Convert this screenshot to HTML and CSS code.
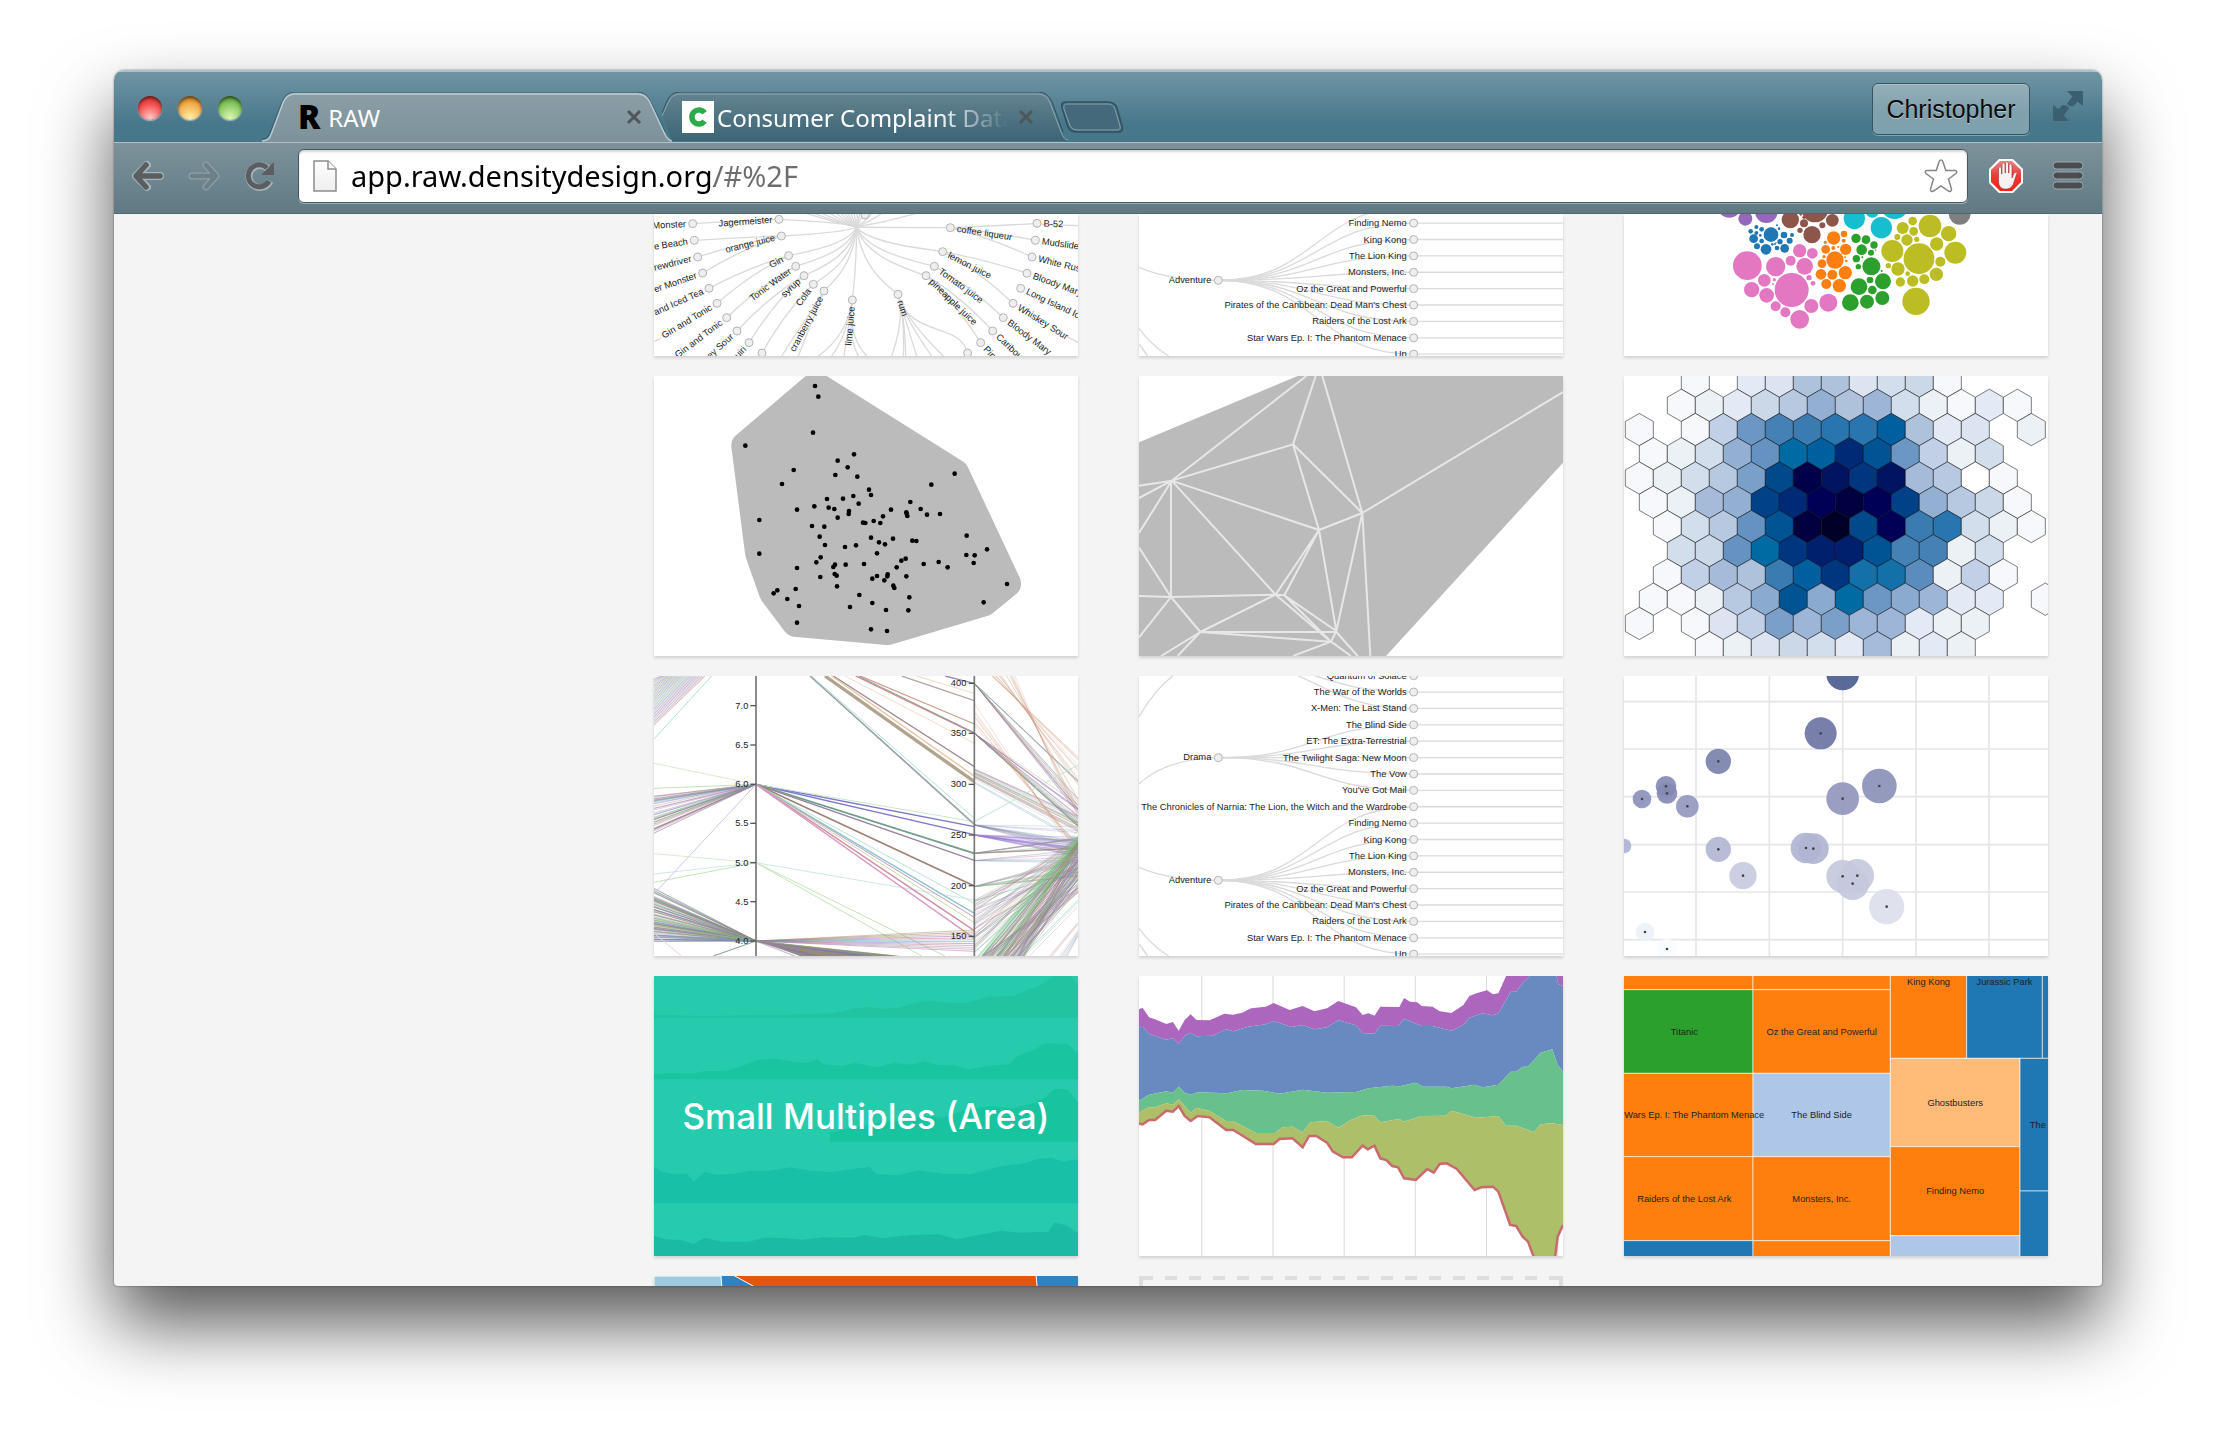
FILE: index.html
```html
<!DOCTYPE html>
<html lang="en">
<head>
<meta charset="utf-8">
<title>RAW</title>
<link rel="stylesheet" href="styles.css">
</head>
<body>
<div class="window">
  <header class="titlebar">
    <div class="lights">
      <button class="light light-red" aria-label="Close window"></button>
      <button class="light light-amber" aria-label="Minimize window"></button>
      <button class="light light-green" aria-label="Zoom window"></button>
    </div>
    <nav class="tabs">
      <div class="tab tab-active">
        <svg class="tab-shape" viewBox="0 0 424 50" preserveAspectRatio="none" aria-hidden="true">
          <defs><linearGradient id="ga" x1="0" y1="0" x2="0" y2="1"><stop offset="0" stop-color="#8b9ea6"/><stop offset="1" stop-color="#7d929b"/></linearGradient></defs>
          <path d="M0 50C9 49 8 45 12 36L22 10Q26 1 34 1H388Q397 1 401 10L417 41Q420 49 424 50Z" fill="url(#ga)"/>
          <path d="M0 47C7 47 7 43 11 34L21 9Q25 0 34 0H388Q398 0 402 10L417 40" fill="none" stroke="#33525e" stroke-opacity=".7"/>
          <path d="M0 49C9 48 8 45 12 36L22 10Q26 2 34 2H388Q397 2 401 10L416 41Q420 49 424 49" fill="none" stroke="#bccbd1" stroke-width="1.5"/>
        </svg>
        <button class="tab-title"><span class="fav-r">R</span><span>RAW</span></button>
        <button class="tab-close" aria-label="Close tab"><svg viewBox="0 0 16 16"><path d="M2 2L14 14M14 2L2 14"/></svg></button>
      </div>
      <div class="tab tab-back">
        <svg class="tab-shape" viewBox="0 0 408 50" preserveAspectRatio="none" aria-hidden="true">
          <defs><linearGradient id="gb" x1="0" y1="0" x2="0" y2="1"><stop offset="0" stop-color="#64838f"/><stop offset="1" stop-color="#3c6576"/></linearGradient></defs>
          <path d="M0 22L5 10Q9 1 18 1H378Q387 1 391 10L402 40Q405 48 408 49H10Z" fill="url(#gb)"/>
          <path d="M0 21L5 9Q9 0 18 0H378Q388 0 392 10L403 40" fill="none" stroke="#2f5060"/>
          <path d="M0 24L6 11Q10 2 18 2H378Q386 2 390 11L401 40Q404 48 408 48" fill="none" stroke="#8fa8b2"/>
        </svg>
        <button class="tab-title"><svg class="fav-c" viewBox="0 0 32 32"><rect width="32" height="32" fill="#fff"/><path d="M22.500 11.800A7 7 0 1 0 22.500 20.200" fill="none" stroke="#2bab49" stroke-width="5.500"/></svg><span class="fade">Consumer Complaint Datab</span></button>
        <button class="tab-close" aria-label="Close tab"><svg viewBox="0 0 16 16"><path d="M2 2L14 14M14 2L2 14"/></svg></button>
      </div>
      <button class="new-tab" aria-label="New tab"><svg viewBox="0 0 64 32"><path d="M6 1H48Q55 1 57 7L62 25Q64 31 58 31H17Q10 31 8 26L2 7Q0 1 6 1Z" fill="#44697a" stroke="#2f5261" stroke-width="1.500"/><path d="M7 3H48Q53 3 55 8L60 25Q61 29 57 29H17Q12 29 10 25L4 8Q3 3 7 3Z" fill="none" stroke="#87a2ad"/></svg></button>
    </nav>
    <button class="profile">Christopher</button>
    <button class="icon-btn expand" aria-label="Full screen"><svg viewBox="0 0 30 30"><path d="M14 1H29V15L24 11L20 15Q16 16 14 13L19 6ZM1 14L6 18L10 14Q14 14 16 17L11 24L16 29H1Z" fill="#3b5f6e"/></svg></button>
  </header>

  <div class="toolbar">
    <button class="icon-btn" aria-label="Back"><svg viewBox="0 0 32 30"><path d="M28 15H6M15 4L4 15L15 26" fill="none" stroke="#a5b4ba" stroke-width="8" stroke-linecap="round" stroke-linejoin="round"/><path d="M28 15H6M14 4L4 15L14 26" fill="none" stroke="#5b5e60" stroke-width="5.500" stroke-linecap="round" stroke-linejoin="round"/></svg></button>
    <button class="icon-btn" aria-label="Forward"><svg viewBox="0 0 32 30"><path d="M4 15H26M18 4L28 15L18 26" fill="none" stroke="#8fa1a9" stroke-width="7" stroke-linecap="round" stroke-linejoin="round"/><path d="M4 15H26M18 4L28 15L18 26" fill="none" stroke="#6d7f87" stroke-width="4.500" stroke-linecap="round" stroke-linejoin="round"/></svg></button>
    <button class="icon-btn" aria-label="Reload"><svg viewBox="0 0 32 30"><path d="M26 20A11 11 0 1 1 24 8" fill="none" stroke="#a5b4ba" stroke-width="7"/><path d="M25 20A11 11 0 1 1 23 7" fill="none" stroke="#5b5e60" stroke-width="5"/><path d="M30 1V14H17Z" fill="#5b5e60"/></svg></button>
    <div class="address">
      <svg class="page-icon" viewBox="0 0 24 32" aria-hidden="true"><defs><linearGradient id="gp" x1="0" y1="0" x2="0" y2="1"><stop offset="0" stop-color="#fff"/><stop offset="1" stop-color="#eee"/></linearGradient></defs><path d="M1 1H15L23 9V31H1Z" fill="url(#gp)" stroke="#8c8c8c" stroke-width="1.500"/><path d="M15 1V9H23" fill="#fff" stroke="#8c8c8c" stroke-width="1.500"/></svg>
      <input class="url" type="text" aria-label="Address" value="app.raw.densitydesign.org/#%2F">
      <button class="icon-btn star" aria-label="Bookmark"><svg viewBox="0 0 36 36"><path d="M18 2Q19.500 2 20 4L22.800 12.500H32Q35 13 33 15.500L25.500 21L28.500 31Q28.500 34.500 25.500 33L18 28L10.500 33Q7.500 34.500 7.500 31L10.500 21L3 15.500Q1 13 4 12.500H13.200L16 4Q16.500 2 18 2Z" fill="#fff" stroke="#858585" stroke-width="1.500"/></svg></button>
    </div>
    <button class="icon-btn" aria-label="AdBlock"><svg viewBox="0 0 36 36"><defs><linearGradient id="gr" x1="0" y1="0" x2="0" y2="1"><stop offset="0" stop-color="#e88585"/><stop offset=".5" stop-color="#e93a34"/><stop offset="1" stop-color="#ff1f12"/></linearGradient></defs><path d="M11 1H25L35 11V25L25 35H11L1 25V11Z" fill="#fff"/><path d="M12 3H24L33 12V24L24 33H12L3 24V12Z" fill="url(#gr)"/><path d="M10.500 20V10Q12 7.500 13.500 10V16H14V6Q15.500 3.500 17 6V15H17.500V5Q19 2.500 20.500 5V15H21V7Q22.500 4.500 24 7V20L26 15Q29 13 29 15L25 27Q22.500 31 19 31H16Q11 30 10.500 24Z" fill="#f6f2f2" stroke="#9c3030" stroke-width=".6"/></svg></button>
    <button class="icon-btn menu" aria-label="Menu"><svg viewBox="0 0 32 30"><g fill="#4a4c4e" stroke="#9aaab1" stroke-width="1"><rect x="1" y="1" width="30" height="7" rx="3.500"/><rect x="1" y="11" width="30" height="7" rx="3.500"/><rect x="1" y="21" width="30" height="7" rx="3.500"/></g></svg></button>
  </div>

  <main class="page">
    <div class="gallery">
      <a class="card" href="#radial"><svg id="radial" viewBox="42 27 1272 426" role="img" aria-label="Circular dendrogram"></svg></a>
      <a class="card" href="#treeA"><svg id="treeA" viewBox="24 432 1272 426" role="img" aria-label="Cluster dendrogram"></svg></a>
      <a class="card" href="#packing"><svg id="packing" viewBox="27 27 1272 426" role="img" aria-label="Circle packing"></svg></a>
      <a class="card" href="#hull"><svg id="hull" viewBox="27 18 1272 840" role="img" aria-label="Convex hull"></svg></a>
      <a class="card" href="#mesh"><svg id="mesh" viewBox="24 18 1272 840" role="img" aria-label="Delaunay triangulation"></svg></a>
      <a class="card" href="#hexbin"><svg id="hexbin" viewBox="27 513 1272 840" role="img" aria-label="Hexagonal binning"></svg></a>
      <a class="card" href="#parallel"><svg id="parallel" viewBox="27 18 1272 840" role="img" aria-label="Parallel coordinates"></svg></a>
      <a class="card" href="#treeB"><svg id="treeB" viewBox="24 18 1272 840" role="img" aria-label="Reingold-Tilford tree"></svg></a>
      <a class="card" href="#scatter"><svg id="scatter" viewBox="27 0 1272 840" role="img" aria-label="Scatter plot"></svg></a>
      <a class="card card-titled" href="#multiples"><svg id="multiples" viewBox="15 18 715 840" preserveAspectRatio="none" aria-hidden="true"></svg><span class="card-title">Small Multiples (Area)</span></a>
      <a class="card" href="#stream"><svg id="stream" viewBox="831 18 715 840" preserveAspectRatio="none" role="img" aria-label="Streamgraph"></svg></a>
      <a class="card" href="#treemap"><svg id="treemap" viewBox="27 0 1272 840" role="img" aria-label="Treemap"></svg></a>
      <a class="card" href="#voronoi"><svg id="voronoi" viewBox="0 0 424 280" role="img" aria-label="Voronoi tessellation"><rect width="424" height="280" fill="#3182bd"/><path d="M0 0H67L90 280H0Z" fill="#9ecae1" stroke="#fff"/><path d="M79 -1L382 -1L386 40L300 120Z" fill="#e6550d" stroke="#fff"/></svg></a>
      <a class="card card-empty" href="#add"><svg id="add" viewBox="0 0 424 280" role="img" aria-label="Add your own chart"><path d="M2 2H422M2 278H422M2 0V280M422 0V280" fill="none" stroke="#ddd" stroke-width="4" stroke-dasharray="12 12"/></svg></a>
    </div>
  </main>
</div>
<script src="charts.js"></script>
</body>
</html>
```
FILE: styles.css
```css
* { box-sizing: border-box; }
body {
  margin: 0;
  height: 100vh;
  padding: 70px 114px 158px;
  background: #fff;
  font-family: "Liberation Sans", Arial, sans-serif;
  display: flex;
  overflow: hidden;
}
button { border: 0; padding: 0; background: none; font: inherit; color: inherit; }
svg { display: block; }

.window {
  flex: 1;
  min-width: 0;
  display: flex;
  flex-direction: column;
  border-radius: 10px 10px 4px 4px;
  overflow: hidden;
  background: #f4f4f4;
  box-shadow: 0 0 2px rgba(0, 0, 0, .5), 0 38px 72px rgba(0, 0, 0, .66);
}

/* title bar and tabs */
.titlebar {
  display: flex;
  align-items: flex-end;
  height: 72px;
  padding-right: 18px;
  background: linear-gradient(#6f95a4, #47778a 75%, #47778a);
  border-top: 2px solid #aebfc6;
}
.lights { display: flex; gap: 16px; padding: 0 20px 22px 24px; }
.light { width: 24px; height: 24px; border-radius: 50%; box-shadow: 0 1px 1px rgba(255, 255, 255, .5), inset 0 2px 3px rgba(0, 0, 0, .5); }
.light-red { background: radial-gradient(circle at 50% 90%, #ffc6c6, #f4504f 55%, #b32020); }
.light-amber { background: radial-gradient(circle at 50% 90%, #fff0a8, #f3ad4c 55%, #a96512); }
.light-green { background: radial-gradient(circle at 50% 90%, #dcf7b4, #88c862 55%, #3c7e22); }

.tabs { flex: 1; display: flex; align-items: flex-end; font-family: "Noto Sans", "Open Sans", sans-serif; font-size: 24px; color: #fff; }
.tab { position: relative; display: flex; align-items: center; height: 50px; }
.tab-shape { position: absolute; inset: 0; width: 100%; height: 100%; }
.tab-active { width: 410px; z-index: 1; padding: 0 30px 0 36px; }
.tab-back { width: 406px; margin-left: -10px; padding: 0 34px 0 20px; }
.tab-title { position: relative; flex: 1; min-width: 0; display: flex; align-items: center; gap: 8px; text-align: left; white-space: nowrap; }
.tab-back .tab-title { gap: 3px; }
.fav-r { color: #000; font: 800 33px/32px "Open Sans", sans-serif; }
.fav-c { flex: none; width: 32px; height: 32px; }
.fade { overflow: hidden; mask-image: linear-gradient(90deg, #000 75%, transparent); }
.tab-close { position: relative; width: 16px; height: 16px; }
.tab-back .tab-close { margin-left: 10px; }
.tab-close path { stroke: #51565a; stroke-width: 3; }
.new-tab { width: 64px; height: 32px; margin: 0 0 9px -8px; }

.profile {
  align-self: center;
  width: 158px;
  height: 52px;
  margin: 4px 22px 0 0;
  border: 1px solid #355564;
  border-radius: 6px;
  background: linear-gradient(#96afb9, #7fa0ad 60%);
  box-shadow: 0 1px 0 #86a3ae, inset 0 1px 0 #a9bec6;
  color: #0b0d0e;
  font-size: 25px;
  text-shadow: 0 1px 0 #b5c7ce;
}
.icon-btn { flex: none; width: 32px; height: 32px; display: grid; place-items: center; }
.icon-btn svg { width: 100%; height: 100%; }
.expand { align-self: center; margin-top: -2px; }

/* toolbar */
.toolbar {
  display: flex;
  align-items: center;
  gap: 24px;
  height: 72px;
  padding: 0 18px 4px;
  background: linear-gradient(#7d929b, #5f7a84);
  border-top: 1px solid #b2c0c6;
  border-bottom: 1px solid #55656c;
}
.address {
  flex: 1;
  display: flex;
  align-items: center;
  height: 54px;
  margin-left: -2px;
  padding: 0 8px 0 14px;
  background: #fff;
  border: 1px solid #47565d;
  border-radius: 6px;
  box-shadow: 0 1px 0 #a3b1b7, inset 0 2px 2px rgba(0, 0, 0, .15);
}
.page-icon { width: 24px; height: 32px; margin-right: 14px; }
.url {
  flex: 1;
  min-width: 0;
  border: 0;
  padding: 0;
  outline: 0;
  font: 29px/36px "Noto Sans", "Open Sans", sans-serif;
  color: transparent;
  background: linear-gradient(90deg, #000 363px, #6d6d6d 363px);
  background-clip: text;
}
.star { width: 36px; height: 36px; }
.toolbar > .icon-btn:nth-last-child(2) { width: 36px; height: 36px; margin: 0 4px 0 -4px; }

/* gallery */
.page { flex: 1; min-height: 0; overflow: hidden; }
.gallery {
  display: grid;
  grid-template-columns: repeat(3, 1fr);
  gap: 20px 61px;
  padding: 0 54px 0 540px;
}
.card { display: block; background: #fff; box-shadow: 0 2px 3px rgba(0, 0, 0, .15); color: #fff; text-decoration: none; overflow: hidden; }
.card svg { width: 100%; }
.card text { font: 28px "Liberation Sans", Arial, sans-serif; fill: #222; }
.card .end { text-anchor: end; }
.card .mid { text-anchor: middle; }
.card-titled { display: grid; place-items: center; }
.card-titled > * { grid-area: 1 / 1; }
.card-titled svg, #stream { aspect-ratio: 424 / 280; height: auto; }
.card-title { font: 500 35px/40px Inter, "Open Sans", sans-serif; }
.card-empty { background: none; box-shadow: none; }
```
FILE: charts.js
```js
const put = (id, markup) => { document.getElementById(id).innerHTML = markup; };
const line = (x1, y1, x2, y2, extra = '') => `<line x1="${x1}" y1="${y1}" x2="${x2}" y2="${y2}" ${extra}/>`;
const dot = (x, y, r, extra = '') => `<circle cx="${x}" cy="${y}" r="${r}" ${extra}/>`;
const pairs = s => s.trim().split(/\s+/).map(p => p.split(',').map(Number));
const NODE = 'fill="#eee" stroke="#b4b4b4" stroke-width="3"';
const LINK = 'fill="none" stroke="#dadada" stroke-width="4"';

/* cluster dendrogram */
function tree() {
  const leaves = ['Quantum of Solace', 'The War of the Worlds', 'X-Men: The Last Stand', 'The Blind Side', 'ET: The Extra-Terrestrial', 'The Twilight Saga: New Moon', 'The Vow', "You've Got Mail", 'The Chronicles of Narnia: The Lion, the Witch and the Wardrobe', 'Finding Nemo', 'King Kong', 'The Lion King', 'Monsters, Inc.', 'Oz the Great and Powerful', "Pirates of the Caribbean: Dead Man's Chest", 'Raiders of the Lost Ark', 'Star Wars Ep. I: The Phantom Menace', 'Up'];
  const parent = i => i < 3 ? -30 : i < 8 ? 263 : 631;
  let links = '', nodes = '', texts = '';
  leaves.forEach((t, i) => {
    const y = 17 + i * 49.15;
    links += `<path d="M262 ${parent(i)}C555 ${parent(i)} 555 ${y} 848 ${y}H1296"/>`;
    nodes += dot(848, y, 12, NODE);
    texts += `<text class="end" x="827" y="${y + 9}">${t}</text>`;
  });
  [['Drama', 263], ['Adventure', 631]].forEach(([t, y]) => {
    nodes += dot(262, y, 12, NODE);
    texts += `<text class="end" x="241" y="${y + 8}">${t}</text>`;
  });
  links += '<path d="M24 140C55 88 85 48 125 18M24 342Q100 270 250 263M24 592Q110 630 250 631M24 775Q60 825 113 858M24 822L50 858"/>';
  return `<g ${LINK}>${links}</g>${nodes}${texts}`;
}
put('treeA', tree());
put('treeB', tree());

/* circular dendrogram: x, y, label, angle */
const inner = [[931, 68, 'coffee liqueur', 9], [908, 140, 'lemon juice', 27], [883, 184, 'Tomato juice', 36], [858, 212, 'pineapple juice', 44], [774, 268, 'rum', 72],
  [417, 43, 'Jagermeister', -4], [424, 93, 'orange juice', -14], [446, 152, 'Gin', -28], [467, 184, 'Tonic Water', -36], [492, 212, 'syrup', -43], [520, 238, 'Cola', -53], [552, 258, 'cranberry juice', -62], [637, 285, 'lime juice', -85]];
const outer = [[1191, 55, 'B-52', 2], [1186, 106, 'Mudslide', 8], [1176, 156, 'White Russian', 14], [1161, 205, 'Bloody Mary', 20], [1142, 250, 'Long Island Iced Tea', 25], [1119, 295, 'Whiskey Sour', 32], [1090, 338, 'Bloody Mary', 37], [1058, 378, 'Caribou Lou', 43], [1022, 413, 'Pina Colada', 48], [983, 444, '', 0],
  [158, 56, 'Monster', -3], [163, 106, 'e Beach', -9], [173, 156, 'Screwdriver', -14], [188, 204, 'er Monster', -19], [207, 250, 'and Iced Tea', -24], [231, 295, 'Gin and Tonic', -31], [260, 338, 'Gin and Tonic', -37], [291, 378, 'ey Sour', -42], [327, 413, 'Daiquiri', -48], [366, 444, '', 0]];
{
  let s = `<g ${LINK}>`;
  inner.forEach(([x, y]) => {
    const dx = x - 650, dy = y - 66;
    s += `<path d="M650 66C${650 + dx * .12} ${66 + dy * .6} ${650 + dx * .7} ${66 + dy * .85} ${x} ${y}"/>`;
  });
  const joins = [[0, 0], [0, 1], [0, 2], [1, 3], [1, 5], [2, 6], [3, 7], [3, 8], [5, 10], [6, 11], [6, 12], [6, 13], [7, 14], [7, 15], [8, 16], [9, 17], [9, 18], [10, 19]];
  joins.forEach(([a, b]) => {
    const [x, y] = inner[a], [u, v] = outer[b];
    s += `<path d="M${x} ${y}Q${x + (u - x) * .5} ${y + (v - y) * .35} ${u} ${v}"/>`;
  });
  s += [755, 790, 797, 830, 875, 910].map(x => `<path d="M774 268Q795 340 ${x} 453"/>`).join('') + '<path d="M774 268C810 400 960 350 983 444"/>';
  s += [535, 575, 612, 655, 680].map(x => `<path d="M637 285Q622 390 ${x} 453"/>`).join('');
  s += '<path d="M552 258L475 453M552 258L425 453M42 410L62 400M1204 58L1314 62M1280 395L1314 412"/>';
  s += [490, 515, 540, 565, 585, 600, 612, 622, 632, 642, 652, 660, 670, 700, 730, 840].map(x => `<path d="M650 66Q${(x + 650) / 2} 50 ${x} 22"/>`).join('') + '</g>';
  s += dot(675, 30, 12, NODE);
  inner.concat(outer).forEach(([x, y, t, a]) => {
    const right = x > 700;
    s += dot(x, y, 12, NODE) + `<text class="${right ? '' : 'end'}" transform="translate(${x} ${y}) rotate(${a})" x="${right ? 20 : -20}" y="9">${t}</text>`;
  });
  put('radial', s);
}

/* circle packing */
put('packing', Object.entries({
  '#9467bd': '343,0,38 391,41,21 454,20,34',
  '#8c564b': '526,44,26 600,12,40 652,46,19 591,89,26 567,55,12 555,76,8 622,61,9 567,37,5 557,28,4',
  '#17becf': '718,40,32 772,18,20 839,0,42 799,68,32',
  '#7f7f7f': '1034,26,33',
  '#1f77b4': '468,89,22 407,79,7 424,66,6 440,73,7 416,101,13 426,124,9 440,108,7 424,84,6 436,91,4 453,133,16 486,61,3 492,71,4 507,90,10 495,110,8 531,90,6 524,107,9 509,130,13 486,129,7 472,118,4 480,117,3 483,113,2',
  '#ff7f0e': '656,99,20 687,87,10 631,112,5 686,107,6 632,133,13 692,133,17 655,129,6 670,126,3 660,165,26 627,155,5 621,176,13 694,168,4 690,157,3 618,208,16 652,209,15 691,203,20 634,237,15 673,242,20',
  '#2ca02c': '723,100,14 753,104,13 777,120,11 740,134,16 768,143,9 724,161,11 742,157,3 769,184,27 730,185,8 800,198,3 765,225,10 804,229,24 732,245,25 772,255,13 802,279,21 756,290,21 706,293,25 782,135,2',
  '#bcbd22': '893,48,13 863,69,18 896,79,13 945,63,34 1001,86,23 847,96,9 876,105,17 905,103,8 832,138,33 912,161,46 965,117,20 1021,143,33 976,170,15 820,182,8 849,192,20 878,206,7 964,208,20 928,223,15 893,228,17 856,231,14 903,289,41',
  '#e377c2': '397,182,43 482,185,29 554,137,20 592,145,16 527,167,15 569,184,25 582,218,8 594,235,7 530,255,51 448,226,19 410,254,23 455,271,22 478,224,5 474,237,3 482,304,15 511,322,15 554,343,28 589,303,21 640,293,27'
}).map(([c, list]) => `<g fill="${c}">${pairs(list).map(p => dot(...p)).join('')}</g>`).join(''));

/* convex hull */
put('hull', '<path fill="#bbb" d="M482 18H545L955 275Q964 281 968 290L1125 625Q1134 650 1118 668L1045 728Q1036 736 1024 739L745 822Q730 827 715 824L445 800Q430 797 420 785L352 695Q347 688 344 680L305 570Q301 560 300 550L259 230Q258 208 273 196Z"/>' +
  pairs('510,48 520,80 504,188 301,227 627,253 578,272 608,292 446,300 571,315 637,320 411,342 929,311 859,344 672,359 678,375 546,387 594,386 625,378 641,401 508,409 551,413 568,417 612,423 611,432 578,443 456,419 796,396 738,419 714,439 784,427 787,438 785,431 827,417 846,434 885,432 343,450 654,458 661,459 686,453 706,459 501,468 538,470 524,500 540,525 678,503 702,517 720,523 744,506 600,531 633,526 802,512 814,513 965,497 1026,538 964,555 989,556 986,579 343,551 696,550 527,562 514,577 456,594 570,584 565,591 602,584 657,582 782,566 769,572 755,592 836,582 881,576 908,592 569,612 575,617 526,621 682,626 696,618 728,613 727,619 718,631 784,619 576,649 745,647 748,654 1086,642 1016,697 386,670 397,661 427,687 452,657 462,708 456,758 643,675 682,699 615,711 723,720 793,682 790,721 678,778 726,783').map(([x, y]) => dot(x, y, 7)).join(''));

/* Delaunay triangulation */
put('mesh', '<path fill="#bbb" d="M24 217L500 18H1296V278L765 858H24Z"/><path fill="none" stroke="#fff" stroke-opacity=".65" stroke-width="6" stroke-linejoin="bevel" d="M526 18L122 332L486 223L554 18M574 18L694 429L486 223L564 480L122 332L434 674L564 480L694 429L1296 66M694 429L718 858M694 429L616 783L564 480L460 676L434 674L120 681L24 678M122 332L24 347M122 332L24 384M122 332L24 489M120 332V681L24 533M24 802L120 681L208 786L434 674L565 786M208 786H616L680 858M208 786L600 815L460 676L616 783L600 815L486 858M600 815L660 858M565 786L600 815M208 786L90 858M208 786L140 858"/>');

/* hexagonal binning: one letter per cell, light to dark */
{
  const colors = { a: 'f6f8fc', b: 'ebf1f5', c: 'e3eaf5', d: 'dbe4f0', e: 'd2deec', f: 'cbd8e8', g: 'c1d0e7', h: 'b7c9e1', i: 'afc2dc', j: 'a6bbd9', k: '9db6d7', l: '93afd1', m: '8aaacf', n: '7a9fc9', o: '6c97c4', p: '6592c0', q: '5a8cbe', r: '4681b5', s: '3a7bb1', t: '2875af', u: '1370a9', v: '006aa2', w: '005f9e', x: '005494', y: '004a8c', z: '004187', A: '003580', B: '002a76', C: '001f6c', D: '001462', E: '000057', F: '00004a', G: '000040', H: '000028', W: 'ffffff' };
  const rows = ['..a.cdiidefa', '.abcfhlikebaca', 'a.agorsttwicd.b', 'abelpvwBxogbe', 'abehnyFDADjhWa', 'abjlzBEGEzlhfa', '.aehpxGHyEsteba', '.efpvACCxrrbe', '.agjiswAuuqbga', 'aabhmxmvomkcc.a', 'a.adgnknkkcbb', '..abdfecjbcb'];
  put('hexbin', '<g stroke="#000" stroke-opacity=".5" stroke-width="3">' + rows.map((row, r) => [...row].map((c, k) => c === '.' ? '' :
    `<path fill="#${colors[c]}" d="M${(r % 2 ? 115 : 73) + 84 * k} ${528.3 + 72.7 * r - 48.5}l42 24.250v48.500l-42 24.250l-42 -24.250v-48.500z"/>`).join('')).join('') + '</g>');
}

/* parallel coordinates */
{
  let seed = 7;
  const rnd = () => (seed = (seed * 16807) % 2147483647) / 2147483647;
  const hues = ['#9467bd', '#6a9', '#b07aa1', '#a89468', '#7a9', '#c56a8a', '#8a9a5b', '#77c', '#a0776b', '#5aa', '#9c8', '#999', '#a77fb5', '#8a8fc0'];
  const pick = () => hues[Math.floor(rnd() * hues.length)];
  const fan = (n, f, o = .4, w = 3, c = pick) => { let s = ''; for (let i = 0; i < n; i++) s += line(...f(rnd(), i / n), `stroke="${c()}" stroke-opacity="${o}" stroke-width="${w}"`); return s; };
  let s = '';
  s += fan(30, (r, t) => [27, 25 + t * 145, 50 + t * 135, 18], .5) + line(27, 207, 200, 18, 'stroke="#ade3cd" stroke-width="3"');
  s += fan(44, r => [27, 378 + 112 * r, 333, 343]);
  s += fan(100, r => [27, 655 + 160 * r, 333, 813], .45);
  s += '<g stroke-width="3" fill="none"><path stroke="#dcead0" d="M27 280L333 343M27 551L333 578"/><path stroke="#c3e4b8" d="M27 355L333 343M27 637L333 578L830 858M333 578L900 858"/><path stroke="#cfe9e4" d="M27 612L333 578L988 690"/><path stroke="#cfc6ee" d="M27 672L333 343"/><path stroke="#f0cfe0" d="M27 790L110 858"/><path stroke="#7f9f8f" d="M205 858L333 813"/></g>';
  const mids = [['#7a77c8', 470, 4], ['#7f78cc', 494, 4], ['#cbe8c8', 455, 3], ['#6f9f88', 550, 5], ['#97849f', 571, 4], ['#9a7f72', 648, 5], ['#b9e6d0', 700, 3], ['#8fc5c8', 730, 4], ['#b99bc5', 742, 3], ['#c7d9a4', 758, 3], ['#d08fa4', 782, 4], ['#dc98c4', 805, 4]];
  s += mids.map(([c, y, w]) => line(333, 343, 988, y, `stroke="${c}" stroke-width="${w}"`)).join('');
  s += fan(12, (r, t) => [333, 813, 988, 780 + t * 70], .5);
  s += '<path d="M340 813L765 858H465Z" fill="#8a8a7c"/>' + fan(10, (r, t) => [333, 813, 450 + 330 * t, 858], .5, 4);
  const tops = [[495, 18, 463, '#98a4a8', 5], [500, 18, 445, '#b5e5da', 3], [540, 18, 335, '#b0a48f', 10], [565, 18, 290, '#a08a8f', 4], [560, 18, 318, '#e6c3a0', 4], [600, 18, 220, '#f1dccb', 3], [632, 18, 190, '#c98a8a', 4], [645, 18, 162, '#c9a08a', 4], [640, 18, 188, '#909a98', 3], [770, 18, 92, '#b8a8a7', 4], [900, 18, 40, '#9f86b4', 4], [815, 18, 70, '#f0dcc8', 3]];
  s += tops.map(([x, y, v, c, w]) => line(x, y, 988, v, `stroke="${c}" stroke-width="${w}"`)).join('');
  s += fan(14, r => [988, 40, 1299, 325 + r * 130], .4);
  s += fan(22, r => [1040 + 70 * r, 18, 1299, 260 + 200 * r], .25, 3, () => '#cf9c80');
  s += fan(22, r => [988, 190, 1299, 400 + r * 80], .35);
  s += fan(22, r => [988, 292 + 50 * r, 1299, 430 + r * 90], .3);
  s += fan(8, r => [988, 80 + 100 * r, 1260 + r * 39, 520], .3, 3, () => '#d9a285');
  s += fan(16, r => [988, 465, 1299, 460 + r * 90], .25);
  s += fan(20, r => [988, 495, 1299, 500 + r * 60], .35, 3, () => '#9a7fd0');
  s += fan(16, r => [988, 550 + 22 * Math.round(r), 1299, 500 + r * 80], .35);
  s += fan(10, r => [988, 650, 1299, 560 + r * 60], .35);
  s += fan(60, r => [988, 690 + r * 160, 1299, 500 + rnd() * 110], .25);
  s += fan(24, r => [1000 + 80 * r, 858, 1299, 480 + 60 * rnd()], .2, 5, () => '#7cc87c');
  s += fan(110, r => [1010 + 130 * r, 858, 1299, 510 + 160 * rnd()], .35);
  s += fan(14, r => [1130 + 150 * r, 858, 1299, 690 + 120 * r], .25);
  s += line(988, 455, 1299, 285, 'stroke="#bfe6d2" stroke-width="3"');
  s += '<path d="M333 18V858M988 18V858" stroke="#777" stroke-width="5"/>';
  [['7.0', 107], ['6.5', 225], ['6.0', 343], ['5.5', 460], ['5.0', 578], ['4.5', 695], ['4.0', 813]].forEach(([t, y]) => { s += line(316, y, 333, y, 'stroke="#555" stroke-width="4"') + `<text class="end" x="310" y="${y + 9}">${t}</text>`; });
  [['400', 40], ['350', 190], ['300', 343], ['250', 495], ['200', 647], ['150', 799]].forEach(([t, y]) => { s += line(971, y, 988, y, 'stroke="#555" stroke-width="4"') + `<text class="end" x="964" y="${y + 9}">${t}</text>`; });
  put('parallel', s);
}

/* scatter plot */
{
  const Y = y => Math.round((y - 16) * 1.149);
  let s = '<g stroke="#e6e6e6" stroke-width="5">' + [243, 463, 683, 903, 1122].map(x => line(x, 0, x, 840)).join('') + [83, 207, 331, 456, 580, 704].map(y => line(27, Y(y), 1299, Y(y))).join('') + '</g>';
  let centres = '';
  [[683, 11, 49, '#4b5c8f'], [617, 166, 48, '#6b74a3'], [310, 239, 38, '#7b82ac'], [153, 304, 31, '#848ab3'], [156, 322, 31, '#8389b3'], [81, 337, 28, '#8c93bb'], [217, 356, 34, '#9298bf'], [793, 303, 52, '#8b91b7'], [683, 336, 49, '#9197bd'], [27, 460, 22, '#aeb3d1'], [310, 469, 38, '#b2b6d1'], [573, 465, 46, '#b0b4d0'], [595, 467, 46, '#b0b4d0'], [384, 537, 41, '#c8cbdf'], [683, 539, 49, '#c6c9dd'], [727, 537, 50, '#c6c9dd'], [713, 558, 49, '#c6c9dd'], [815, 618, 53, '#dcdfec'], [90, 684, 28, '#edf2f9'], [156, 729, 31, '#f7fbff']]
    .forEach(([x, y, r, c]) => { s += dot(x, Y(y), r, `fill="${c}" fill-opacity=".92"`); if (x > 27) centres += dot(x, Y(y), 4, 'fill="#444"'); });
  put('scatter', s + centres);
}

/* small multiples */
put('multiples', '<rect x="15" y="18" width="715" height="840" fill="#26cbae"/>' +
  '<path fill="#21c3a1" d="M15 134L100 138L240 134L320 130L350 116L375 111L400 117L430 113L455 98L480 92L510 98L545 98L580 80L620 78L645 60L662 50L690 18H718L730 50V143H15Z"/>' +
  '<path fill="#19c5a1" d="M15 312L40 309L80 311L100 303L135 303L160 290L190 270L220 265L250 276L275 278L290 267L300 282L330 288L355 279L390 291L420 279L450 284L470 274L495 285L525 286L545 299L575 288L615 283L630 255L655 240L675 220L712 222L730 250V328H15Z"/>' +
  '<path fill="#17c49f" d="M312 515V487L340 478L370 468L400 455L440 450L470 436L500 444L540 420L580 408L620 414L650 402L672 385L690 357L712 358L730 395V515Z"/>' +
  '<path fill="#18c0a8" d="M15 590L30 606L50 613L72 612L82 634L100 605L120 614L150 611L175 602L210 602L245 592L280 602L315 606L350 597L378 590L390 612L425 616L460 601L500 611L550 612L575 600L600 588L640 580L660 567L685 563L705 575L730 568V700H15Z"/>' +
  '<path fill="#1abaa5" d="M15 797L35 808L60 810L82 822L100 803L130 815L175 815L200 803L230 803L265 809L300 802L350 803L370 795L400 804L450 795L495 793L525 808L560 796L600 782L630 788L680 785L690 758L710 766L730 790V858H15Z"/>');

/* streamgraph: layer boundaries, top to bottom */
{
  const edges = ['831,118 837,113 848,142 858,148 877,162 888,156 898,182 908,150 918,133 928,150 950,151 975,131 990,134 1005,128 1020,115 1045,110 1058,99 1085,120 1107,108 1127,124 1148,115 1167,93 1197,112 1208,135 1218,130 1228,137 1238,110 1270,111 1278,84 1288,95 1300,97 1308,108 1326,110 1338,124 1358,129 1378,105 1388,78 1400,70 1418,61 1428,73 1437,70 1450,18 1546,18',
    '831,172 838,170 848,192 877,209 888,204 898,222 908,197 918,188 928,199 955,197 978,178 990,184 1015,170 1045,163 1058,153 1088,171 1107,165 1127,178 1148,172 1167,151 1197,166 1208,189 1228,191 1238,167 1268,168 1278,146 1308,168 1326,168 1358,182 1378,165 1388,143 1410,130 1428,136 1437,130 1458,65 1467,65 1478,38 1490,18 1535,18 1538,42 1546,48',
    '831,392 848,374 877,364 888,368 898,350 908,368 918,374 930,367 980,370 1005,360 1040,362 1068,371 1107,359 1148,368 1197,366 1218,355 1258,347 1270,349 1298,338 1310,350 1350,350 1358,355 1397,344 1410,352 1437,344 1458,305 1467,305 1478,290 1487,290 1508,248 1528,238 1537,285 1546,305',
    '831,428 848,412 858,412 877,400 888,404 898,388 918,428 928,413 950,423 978,453 990,453 1028,489 1060,489 1073,472 1090,470 1107,487 1120,457 1148,453 1167,473 1188,450 1208,436 1228,437 1238,457 1270,447 1278,455 1308,438 1348,437 1358,422 1400,443 1437,438 1450,467 1467,467 1497,487 1508,463 1528,460 1546,465',
    '831,460 837,463 848,450 858,450 877,422 888,425 898,408 908,438 918,453 930,438 950,442 978,480 990,480 1028,522 1058,522 1068,507 1090,505 1107,532 1118,498 1130,498 1148,518 1158,545 1175,562 1190,562 1208,527 1217,538 1228,527 1238,565 1248,570 1258,588 1268,592 1278,625 1298,630 1317,597 1328,608 1338,582 1350,580 1367,597 1397,660 1408,652 1428,650 1437,665 1457,765 1467,768 1478,800 1487,815 1499,872 1532,872 1537,800 1546,765'];
  const fills = ['#ad66bd', '#698ac0', '#68c08c', '#aebf69'];
  let s = [937, 1057, 1177, 1297, 1417, 1537].map(x => line(x, 18, x, 858, 'stroke="#ddd" stroke-width="2"')).join('');
  fills.forEach((f, i) => { s += `<polygon fill="${f}" points="${edges[i]} ${edges[i + 1].split(' ').reverse().join(' ')}"/>`; });
  s += `<polyline fill="none" stroke="#c96a6c" stroke-width="2.500" vector-effect="non-scaling-stroke" points="${edges[4]}"/>`;
  put('stream', s);
}

/* treemap: x1, y1, x2, y2, colour, label */
{
  const Y = y => Math.round((y - 800) * 1.149);
  const O = '#ff7f0e', B = '#1f77b4', L = '#aec7e8';
  let s = '', t = '';
  [[0, 760, 414, 836, O], [414, 760, 826, 836, O], [0, 836, 414, 1054, '#2ca02c', 'Titanic', 208], [414, 836, 826, 1054, O, 'Oz the Great and Powerful'], [0, 1054, 414, 1272, O, 'Star Wars Ep. I: The Phantom Menace', 208], [414, 1054, 826, 1272, L, 'The Blind Side'], [0, 1272, 414, 1491, O, 'Raiders of the Lost Ark', 208], [414, 1272, 826, 1491, O, 'Monsters, Inc.'], [0, 1491, 414, 1600, B], [414, 1491, 826, 1600, O],
    [826, 616, 1055, 1015, O, 'King Kong'], [1055, 616, 1282, 1015, B, 'Jurassic Park'], [1282, 616, 1320, 1015, B], [826, 1015, 1215, 1246, '#ffbb78', 'Ghostbusters'], [826, 1246, 1215, 1478, O, 'Finding Nemo'], [826, 1478, 1215, 1600, L], [1215, 1015, 1400, 1361, B, 'The Vow', 1299], [1215, 1361, 1400, 1600, B]]
    .forEach(([a, b, c, d, f, label, x]) => {
      s += `<rect x="${a}" y="${Y(b)}" width="${c - a}" height="${Y(d) - Y(b)}" fill="${f}" stroke="#fff" stroke-opacity=".6" stroke-width="3"/>`;
      if (label) t += `<text class="mid" x="${x || (a + c) / 2}" y="${Y((b + d) / 2) + 9}">${label}</text>`;
    });
  put('treemap', s + t);
}
```
